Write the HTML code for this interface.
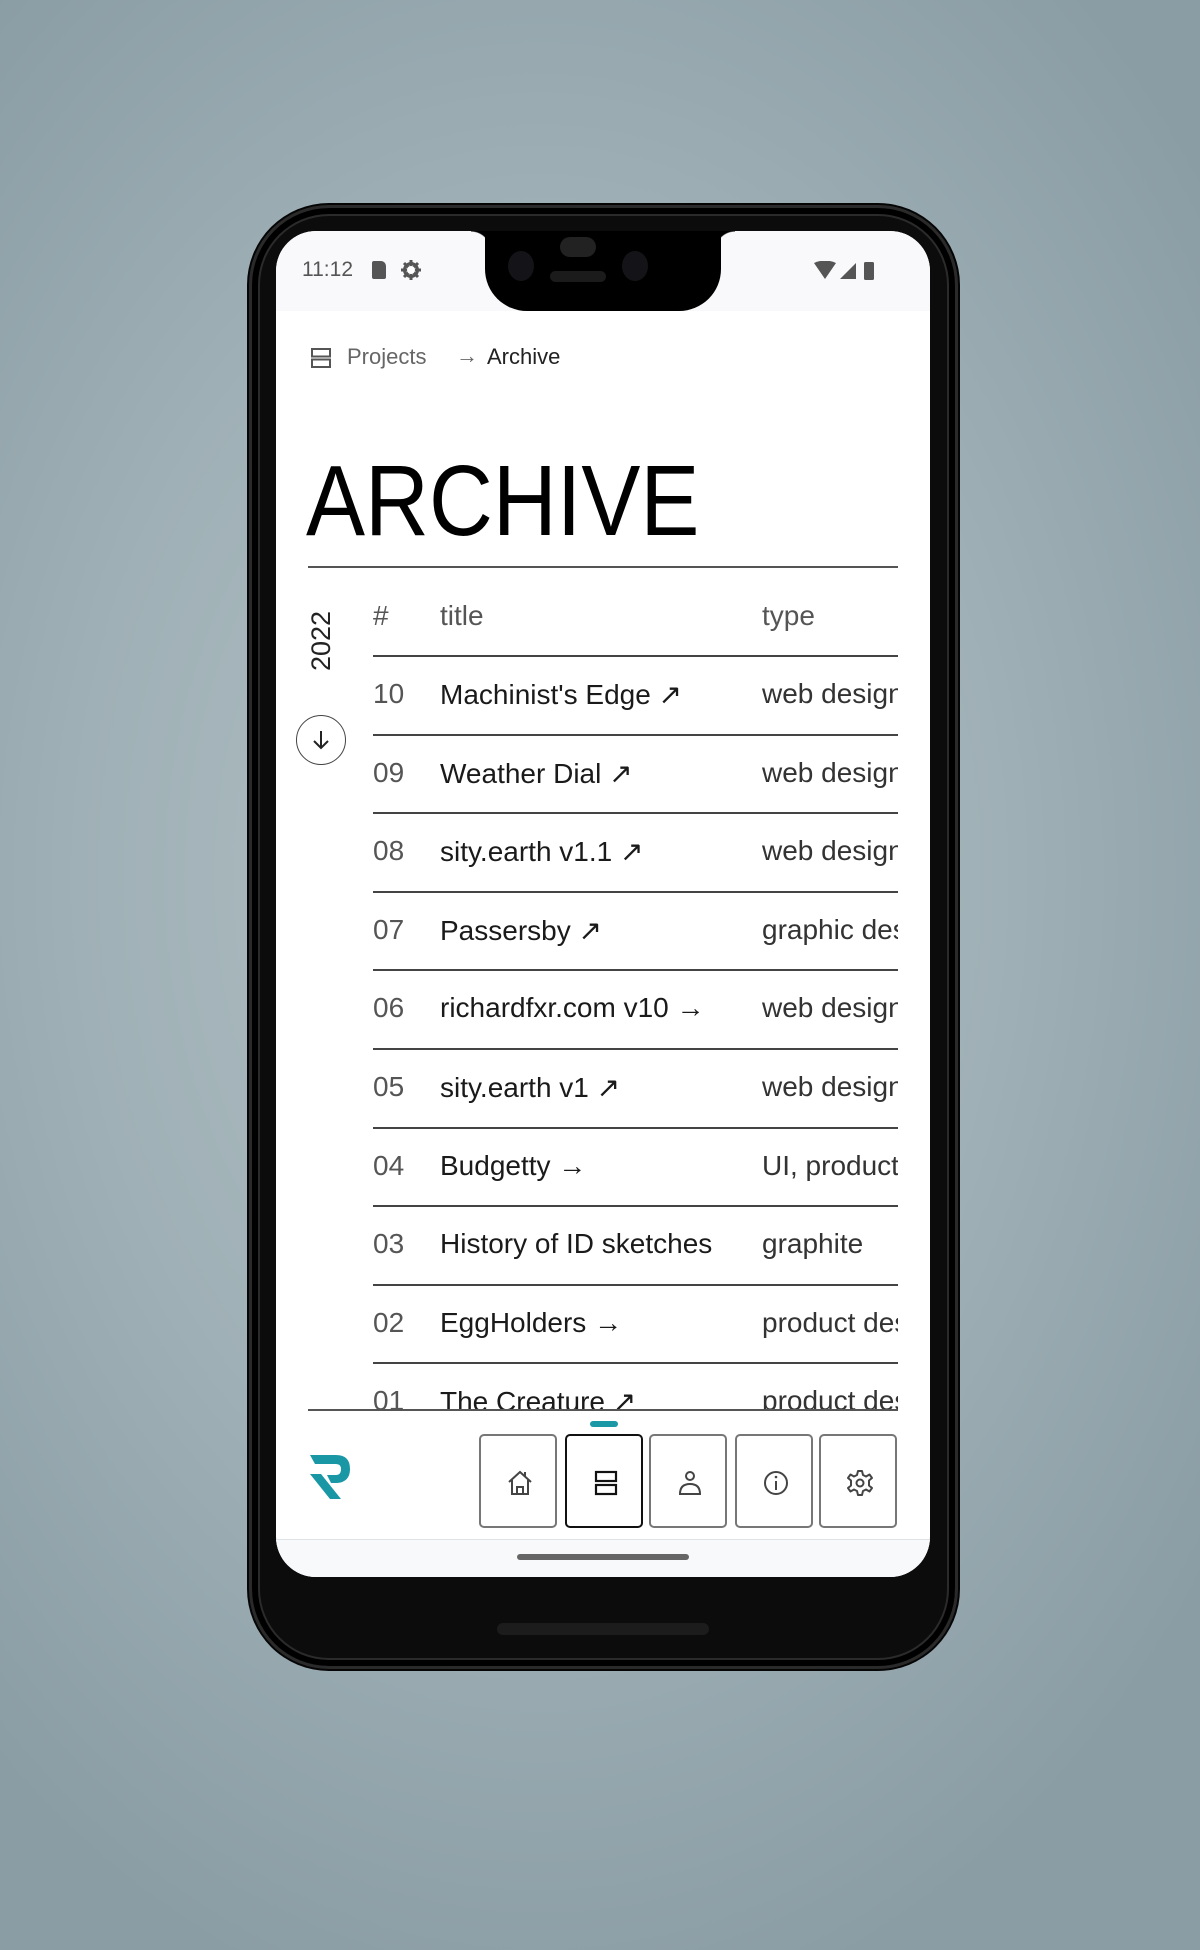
<!DOCTYPE html>
<html><head><meta charset="utf-8"><style>
*{margin:0;padding:0;box-sizing:border-box}
body{width:1200px;height:1950px;overflow:hidden;background:radial-gradient(ellipse 70% 60% at 45% 45%,#b2c0c4 0%,#9fb0b6 55%,#8a9ca4 100%);font-family:"Liberation Sans",sans-serif;position:relative}
.abs{position:absolute}
.phone{left:249px;top:205px;width:709px;height:1464px;border-radius:80px;background:#0c0c0c;border:3px solid #2a2a2a;box-shadow:0 0 0 2px #050505,inset 0 0 0 6px #000,inset 0 0 0 8px #2b2b2b}
.screen{left:276px;top:231px;width:654px;height:1346px;border-radius:40px;background:#fff;overflow:hidden}
.txt{white-space:nowrap}
.row{position:absolute;left:97px;width:525px;height:79px;border-top:2px solid #444}
.row span{position:absolute;top:21px;font-size:28px;white-space:nowrap}
.n{left:0;color:#555}.t{left:67px;color:#1a1a1a}.y{left:389px;color:#333}
.btn{position:absolute;top:1203px;width:78px;height:94px;border:2px solid #777;border-radius:5px;background:#fff}
.btn svg{position:absolute;left:24px;top:32px}
</style></head><body>
<div class="abs" style="left:955px;top:543px;width:5px;height:94px;background:#333;border-radius:2px"></div>
<div class="abs" style="left:955px;top:731px;width:5px;height:183px;background:#333;border-radius:2px"></div>
<div class="abs phone"></div>
<div class="abs screen">
  <div class="abs" style="left:0;top:0;width:654px;height:80px;background:#f9f9fb"></div>
  <div class="abs txt" style="left:26px;top:27px;font-size:21px;color:#555">11:12</div>
  <div class="abs" style="left:96px;top:30px;width:14px;height:18px;background:#555;border-radius:2px 5px 2px 2px"></div>
  <svg class="abs" style="left:124px;top:28px" width="22" height="22" viewBox="0 0 22 22"><circle cx="11" cy="11" r="6.5" fill="none" stroke="#555" stroke-width="3"/><g stroke="#555" stroke-width="3"><line x1="11" y1="1" x2="11" y2="21"/><line x1="1" y1="11" x2="21" y2="11"/><line x1="4" y1="4" x2="18" y2="18"/><line x1="18" y1="4" x2="4" y2="18"/></g><circle cx="11" cy="11" r="4" fill="#fff"/></svg>
  <svg class="abs" style="left:538px;top:30px" width="70" height="20" viewBox="0 0 70 20"><path d="M0 2 Q11 -3 22 2 L11 18Z" fill="#555"/><path d="M26 18 L42 2 L42 18Z" fill="#555"/><rect x="50" y="1" width="10" height="18" rx="1.5" fill="#555"/></svg>
  <div class="abs" style="left:209px;top:-10px;width:236px;height:90px;background:#000;border-radius:0 0 42px 42px"></div>
  <div class="abs" style="left:195px;top:0;width:20px;height:20px;background:radial-gradient(circle at 0 100%,transparent 19px,#000 20px)"></div>
  <div class="abs" style="left:439px;top:0;width:20px;height:20px;background:radial-gradient(circle at 100% 100%,transparent 19px,#000 20px)"></div>
  <div class="abs" style="left:284px;top:6px;width:36px;height:20px;background:#222;border-radius:10px"></div>
  <div class="abs" style="left:274px;top:40px;width:56px;height:11px;background:#1b1b1b;border-radius:6px"></div>
  <div class="abs" style="left:232px;top:20px;width:26px;height:30px;background:#141418;border-radius:50%"></div>
  <div class="abs" style="left:346px;top:20px;width:26px;height:30px;background:#141418;border-radius:50%"></div>
  <svg class="abs" style="left:34px;top:116px" width="22" height="22" viewBox="0 0 22 22"><rect x="2" y="2" width="18" height="7.5" fill="none" stroke="#555" stroke-width="2"/><rect x="2" y="12.5" width="18" height="7.5" fill="none" stroke="#555" stroke-width="2"/></svg>
  <div class="abs txt" style="left:71px;top:113px;font-size:22px;color:#666">Projects</div>
  <div class="abs txt" style="left:180px;top:112px;font-size:22px;color:#666">→</div>
  <div class="abs txt" style="left:211px;top:113px;font-size:22px;color:#222">Archive</div>
  <div class="abs txt" style="left:30px;top:220px;font-size:100px;color:#000;line-height:1;transform:scaleX(0.885);transform-origin:0 0">ARCHIVE</div>
  <div class="abs" style="left:32px;top:335px;width:590px;height:2px;background:#555"></div>
  <div class="abs txt" style="left:45px;top:376px;width:0;height:0"><div style="transform:rotate(-90deg);transform-origin:0 0;position:absolute;left:-15px;top:64px;font-size:27px;color:#222">2022</div></div>
  <div class="abs" style="left:20px;top:484px;width:50px;height:50px;border:1.5px solid #444;border-radius:50%"></div>
  <svg class="abs" style="left:33px;top:497px" width="24" height="24" viewBox="0 0 24 24"><path d="M12 3V20M5 13L12 20L19 13" fill="none" stroke="#222" stroke-width="2"/></svg>
  <div class="abs" style="left:0;top:336px;width:622px;height:843px;overflow:hidden">
    <div class="abs txt" style="left:97px;top:33px;font-size:28px;color:#555">#</div>
    <div class="abs txt" style="left:164px;top:33px;font-size:28px;color:#555">title</div>
    <div class="abs txt" style="left:486px;top:33px;font-size:28px;color:#555">type</div>
    <div class="row" style="top:88px"><span class="n">10</span><span class="t">Machinist's Edge ↗</span><span class="y">web design</span></div>
    <div class="row" style="top:167px"><span class="n">09</span><span class="t">Weather Dial ↗</span><span class="y">web design</span></div>
    <div class="row" style="top:245px"><span class="n">08</span><span class="t">sity.earth v1.1 ↗</span><span class="y">web design</span></div>
    <div class="row" style="top:324px"><span class="n">07</span><span class="t">Passersby ↗</span><span class="y">graphic design</span></div>
    <div class="row" style="top:402px"><span class="n">06</span><span class="t">richardfxr.com v10 →</span><span class="y">web design</span></div>
    <div class="row" style="top:481px"><span class="n">05</span><span class="t">sity.earth v1 ↗</span><span class="y">web design</span></div>
    <div class="row" style="top:560px"><span class="n">04</span><span class="t">Budgetty →</span><span class="y">UI, product</span></div>
    <div class="row" style="top:638px"><span class="n">03</span><span class="t">History of ID sketches</span><span class="y">graphite</span></div>
    <div class="row" style="top:717px"><span class="n">02</span><span class="t">EggHolders →</span><span class="y">product design</span></div>
    <div class="row" style="top:795px"><span class="n">01</span><span class="t">The Creature ↗</span><span class="y">product design</span></div>
  </div>
  <div class="abs" style="left:32px;top:1178px;width:590px;height:2px;background:#555"></div>
  <div class="abs" style="left:314px;top:1190px;width:28px;height:6px;background:#1a98a6;border-radius:3px"></div>
  <svg class="abs" style="left:34px;top:1224px" width="42" height="44" viewBox="0 0 42 44"><path d="M0 0H26Q40 0 40 14Q40 27 27 28H21L17 20H26Q31 20 31 14Q31 9 26 9H5Z" fill="#1a97a5"/><path d="M0 19H11L31 44H20Z" fill="#1a97a5"/></svg>
  <div class="btn" style="left:203px"><svg width="30" height="30" viewBox="0 0 30 30"><path d="M4 14L15 4L26 14M7 12V26H23V12M20 4V9" fill="none" stroke="#444" stroke-width="2"/><path d="M12 26V19H18V26" fill="none" stroke="#444" stroke-width="2"/></svg></div>
  <div class="btn" style="left:289px;border-color:#111"><svg width="30" height="30" viewBox="0 0 30 30"><rect x="5" y="4" width="20" height="9" fill="none" stroke="#111" stroke-width="2.2"/><rect x="5" y="17" width="20" height="9" fill="none" stroke="#111" stroke-width="2.2"/></svg></div>
  <div class="btn" style="left:373px"><svg width="30" height="30" viewBox="0 0 30 30"><circle cx="15" cy="8" r="4" fill="none" stroke="#444" stroke-width="2"/><path d="M5 26Q5 16 15 16Q25 16 25 26Z" fill="none" stroke="#444" stroke-width="2"/></svg></div>
  <div class="btn" style="left:459px"><svg width="30" height="30" viewBox="0 0 30 30"><circle cx="15" cy="15" r="11" fill="none" stroke="#444" stroke-width="2"/><path d="M15 13V22" stroke="#444" stroke-width="2"/><circle cx="15" cy="9" r="1.3" fill="#444"/></svg></div>
  <div class="btn" style="left:543px"><svg width="30" height="30" viewBox="0 0 30 30"><path d="M13 3H17L18 7L21 8.5L24.5 6.5L27 10L24 12.5V17.5L27 20L24.5 23.5L21 21.5L18 23L17 27H13L12 23L9 21.5L5.5 23.5L3 20L6 17.5V12.5L3 10L5.5 6.5L9 8.5L12 7Z" fill="none" stroke="#444" stroke-width="2" stroke-linejoin="round"/><circle cx="15" cy="15" r="3.5" fill="none" stroke="#444" stroke-width="2"/></svg></div>
  <div class="abs" style="left:0;top:1308px;width:654px;height:40px;background:#f8f9fb;border-top:1.5px solid #dde3e6"></div>
  <div class="abs" style="left:241px;top:1323px;width:172px;height:6px;background:#666;border-radius:3px"></div>
</div>
<div class="abs" style="left:497px;top:1623px;width:212px;height:12px;background:#1c1c1c;border-radius:6px"></div>
</body></html>
